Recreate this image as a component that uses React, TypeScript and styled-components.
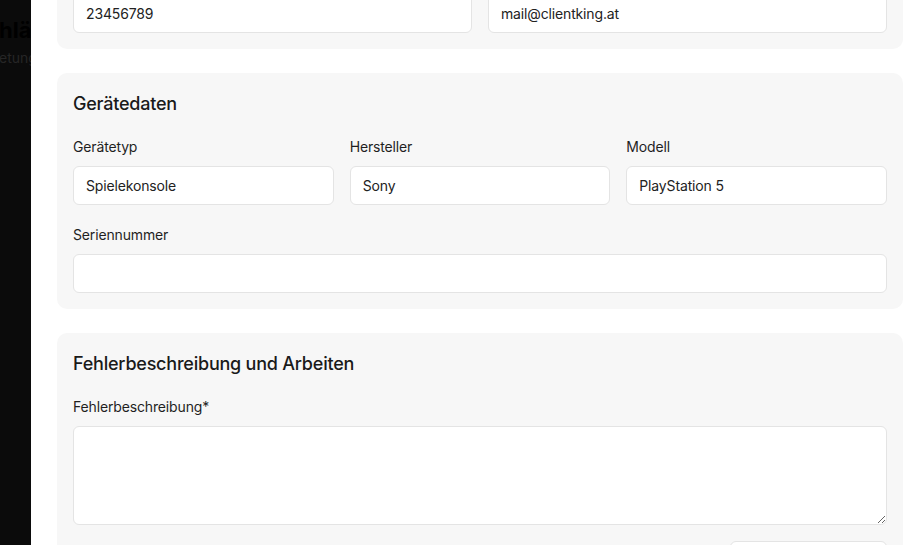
import React, { useLayoutEffect, useRef } from "react";
import styled, { createGlobalStyle } from "styled-components";

const Global = createGlobalStyle`
  html, body { margin: 0; padding: 0; height: 100%; }
  body { font-family: Inter, "Noto Sans", sans-serif; background: #ffffff; overflow: hidden; }
  #root { height: 100%; }
  * { box-sizing: border-box; }
`;

const Screen = styled.div`
  display: flex;
  width: 908px;
  height: 545px;
  overflow: hidden;
`;

const Backdrop = styled.div`
  width: 31px;
  flex: none;
  background: #0b0b0b;
  overflow: hidden;
  display: flex;
  flex-direction: column;
  padding-top: 16px;
  white-space: nowrap;
`;

const BackdropTitle = styled.div`
  font-family: Inter, sans-serif;
  font-size: 22px;
  font-weight: 700;
  line-height: 28px;
  color: #000;
  margin-left: -1px;
`;

const BackdropSub = styled.div`
  font-family: Inter, sans-serif;
  font-size: 14px;
  line-height: 20px;
  color: #262626;
  margin-top: 4px;
  margin-left: -1px;
`;

const Drawer = styled.div`
  flex: 1;
  background: #ffffff;
  overflow-y: auto;
  scrollbar-width: none;
  &::-webkit-scrollbar { display: none; }
  padding: 24px 5px 24px 26px;
  display: flex;
  flex-direction: column;
  gap: 24px;
`;

const Card = styled.section`
  background: #f7f7f7;
  border-radius: 10px;
  padding: 17px 16px 16px 16px;
  display: flex;
  flex-direction: column;
`;

const CardTitle = styled.h2`
  margin: 0 0 19px 0;
  font-size: 18px;
  line-height: 28px;
  font-weight: 500;
  letter-spacing: -0.22px;
  color: #1a1a1a;
`;

const Grid = styled.div<{ $cols: number }>`
  display: grid;
  grid-template-columns: repeat(${(p) => p.$cols}, 1fr);
  column-gap: 16px;
  row-gap: 20px;
`;

const Field = styled.div<{ $span?: number }>`
  display: flex;
  flex-direction: column;
  gap: 9px;
  grid-column: span ${(p) => p.$span ?? 1};
`;

const Label = styled.label`
  font-size: 14px;
  line-height: 20px;
  font-weight: 400;
  letter-spacing: -0.15px;
  color: #1f1f1f;
`;

const Input = styled.input`
  height: 39px;
  width: 100%;
  border: 1px solid #e4e4e4;
  border-radius: 6px;
  background: #ffffff;
  padding: 0 12px;
  font-family: Inter, sans-serif;
  font-size: 14px;
  letter-spacing: -0.15px;
  color: #222;
  outline: none;
`;

const TextArea = styled.textarea`
  height: 99px;
  width: 100%;
  border: 1px solid #e4e4e4;
  border-radius: 6px;
  background: #ffffff;
  padding: 10px 12px;
  font-family: Inter, sans-serif;
  font-size: 14px;
  color: #222;
  outline: none;
  display: block;
`;

const Actions = styled.div`
  display: flex;
  justify-content: flex-end;
  margin-top: 16px;
`;

const GhostButton = styled.button`
  width: 157px;
  height: 36px;
  border: 1px solid #e4e4e4;
  border-radius: 6px;
  background: #ffffff;
  font-family: Inter, sans-serif;
  font-size: 14px;
  font-weight: 500;
  color: #222;
`;

export default function App() {
  const drawerRef = useRef<HTMLDivElement>(null);
  const firstCardRef = useRef<HTMLElement>(null);

  useLayoutEffect(() => {
    const d = drawerRef.current;
    const c = firstCardRef.current;
    if (d && c) {
      d.scrollTop = c.offsetTop - d.offsetTop + c.offsetHeight - 49;
    }
  }, []);

  return (
    <>
      <Global />
      <Screen>
        <Backdrop>
          <BackdropTitle>hläge</BackdropTitle>
          <BackdropSub>etungen</BackdropSub>
        </Backdrop>
        <Drawer ref={drawerRef}>
          <Card ref={firstCardRef}>
            <CardTitle>Kundendaten</CardTitle>
            <Grid $cols={2}>
              <Field>
                <Label>Name*</Label>
                <Input defaultValue="Max Mustermann" />
              </Field>
              <Field>
                <Label>Firma</Label>
                <Input defaultValue="ClientKing" />
              </Field>
              <Field>
                <Label>Telefon</Label>
                <Input defaultValue="23456789" />
              </Field>
              <Field>
                <Label>E-Mail</Label>
                <Input defaultValue="mail@clientking.at" />
              </Field>
            </Grid>
          </Card>

          <Card>
            <CardTitle>Gerätedaten</CardTitle>
            <Grid $cols={3}>
              <Field>
                <Label>Gerätetyp</Label>
                <Input defaultValue="Spielekonsole" />
              </Field>
              <Field>
                <Label>Hersteller</Label>
                <Input defaultValue="Sony" />
              </Field>
              <Field>
                <Label>Modell</Label>
                <Input defaultValue="PlayStation 5" />
              </Field>
              <Field $span={3}>
                <Label>Seriennummer</Label>
                <Input defaultValue="" />
              </Field>
            </Grid>
          </Card>

          <Card>
            <CardTitle>Fehlerbeschreibung und Arbeiten</CardTitle>
            <Field>
              <Label>Fehlerbeschreibung*</Label>
              <TextArea defaultValue="" />
            </Field>
            <Actions>
              <GhostButton>Arbeit hinzufügen</GhostButton>
            </Actions>
          </Card>
        </Drawer>
      </Screen>
    </>
  );
}
